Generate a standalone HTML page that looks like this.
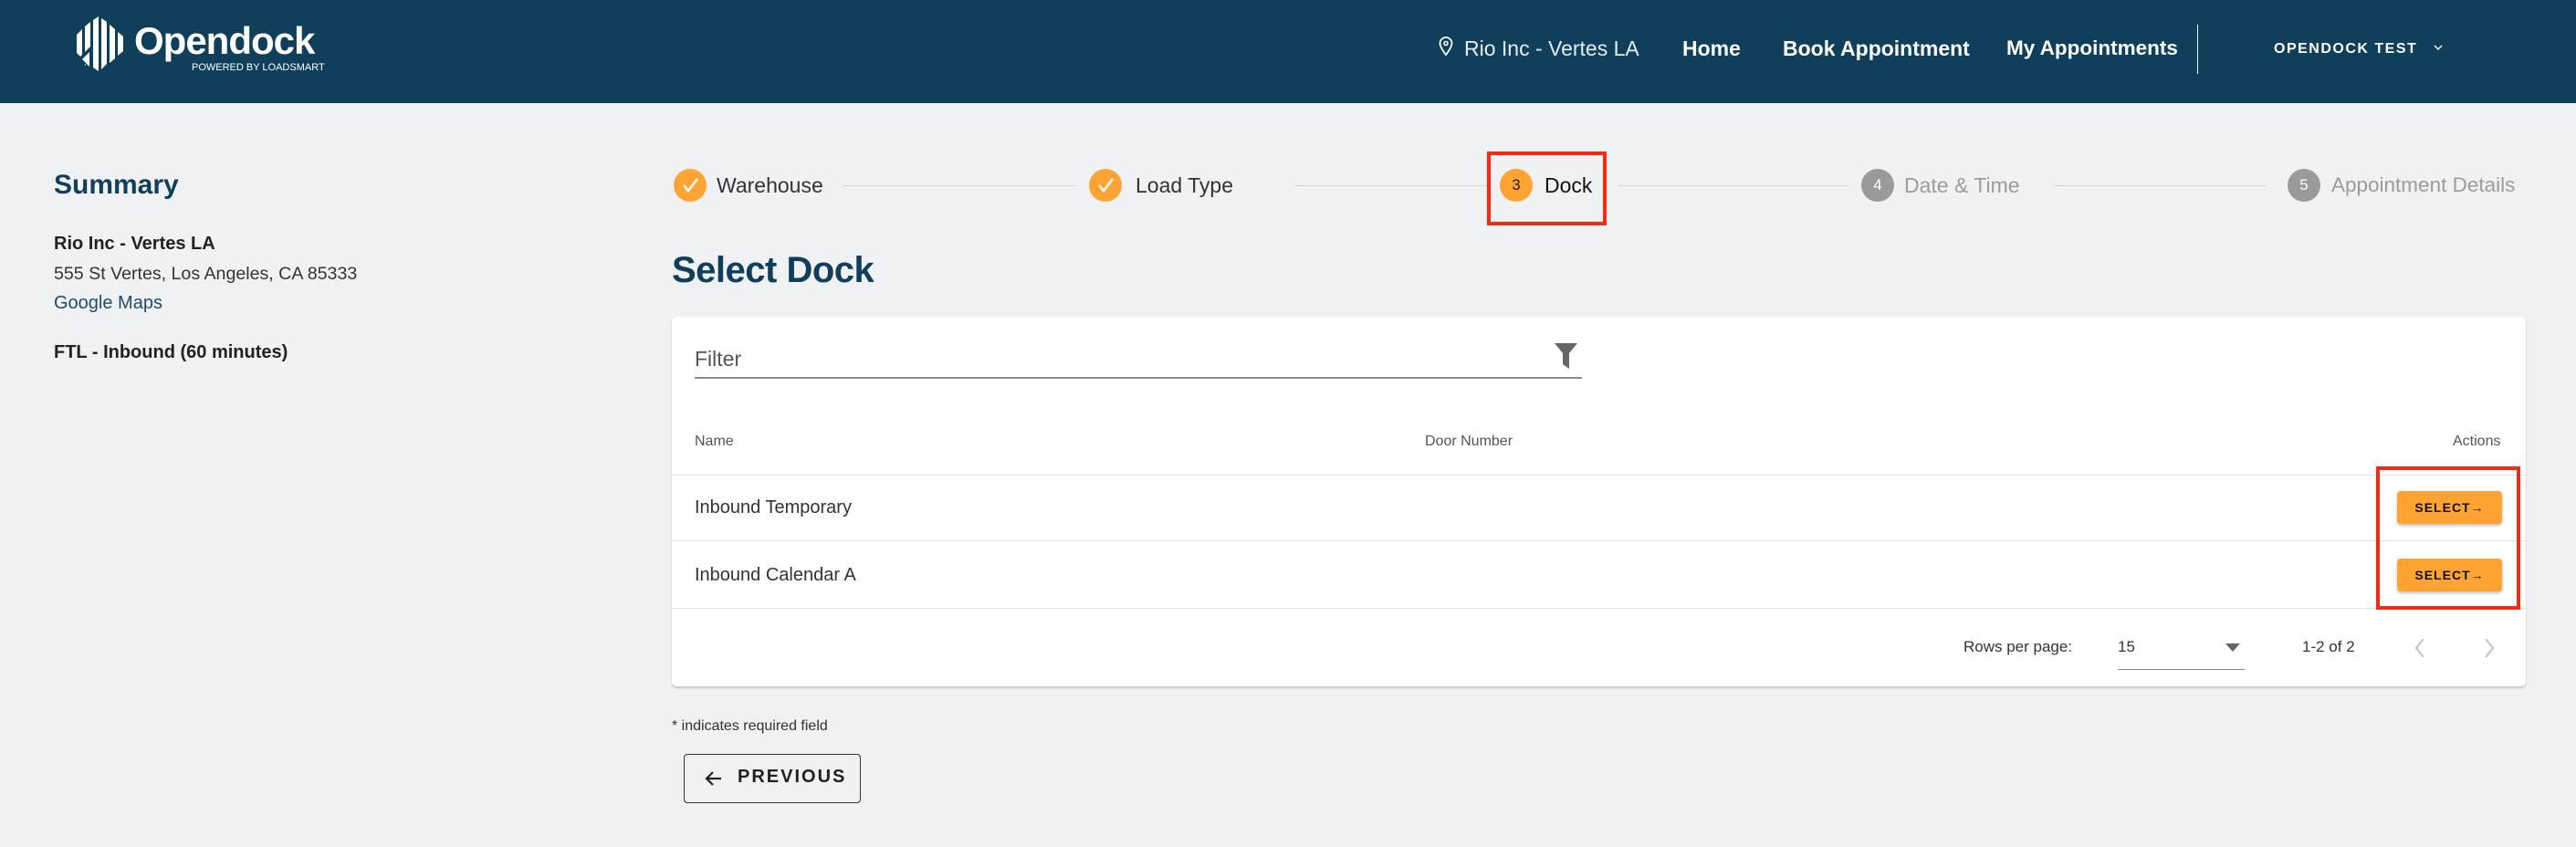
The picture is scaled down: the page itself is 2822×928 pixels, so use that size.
<!DOCTYPE html>
<html><head><meta charset="utf-8"><style>
*{margin:0;padding:0;box-sizing:border-box}
body{width:2822px;height:928px;background:#f0f1f3;font-family:"Liberation Sans",sans-serif;position:relative;overflow:hidden;color:#222}
.a{position:absolute;white-space:nowrap}
.hdr{position:absolute;left:0;top:0;width:2822px;height:113px;background:#0f3f5a}
.nav{color:#fff;font-size:23px;font-weight:bold;top:40px}
.circ{position:absolute;width:36px;height:36px;border-radius:50%;top:185px;color:#fff;font-size:17px;text-align:center;line-height:36px}
.or{background:#ffa333}
.gr{background:#9a9a9a}
.line{position:absolute;height:1px;background:#d0d2d5;top:203px}
.st{top:190px;font-size:23px}
.btn{position:absolute;left:2626px;width:115px;height:36px;background:#ffa333;border-radius:4px;box-shadow:0 2px 3px rgba(0,0,0,.25);font-size:14px;font-weight:bold;letter-spacing:1px;text-align:center;line-height:36px;color:#111}
.rl{position:absolute;left:736px;width:2031px;height:1px;background:#e2e2e2}
</style></head><body>
<div class="hdr"></div>
<svg class="a" style="left:84px;top:18px" width="52" height="60" viewBox="0 0 52 60">
<g fill="#fff">
<polygon points="0,20 6,14 6,46 0,40"/>
<polygon points="9,11 15,6 15,50 9,54"/>
<polygon points="18,4 24,0 24,60 18,56"/>
<polygon points="27,2 33,6 33,52 27,58"/>
<polygon points="36,9 42,14 42,46 36,51"/>
<polygon points="45,17 51,22 51,38 45,43"/>
</g>
<polygon points="2,46 16,32 16,58" fill="#0f3f5a"/>
<polygon points="6,47 14,39 14,55" fill="#fff"/>
</svg>
<div class="a" style="left:147px;top:21px;color:#fff;font-size:42px;font-weight:bold;letter-spacing:-1px">Opendock</div>
<div class="a" style="left:210px;top:68px;color:#fff;font-size:11px">POWERED BY LOADSMART</div>
<svg class="a" style="left:1576px;top:40px" width="16" height="22" viewBox="0 0 16 22"><path d="M8 1a6.5 6.5 0 0 0-6.5 6.5C1.5 12 8 20 8 20s6.5-8 6.5-12.5A6.5 6.5 0 0 0 8 1z" fill="none" stroke="#fff" stroke-width="1.8"/><circle cx="8" cy="7.5" r="2" fill="none" stroke="#fff" stroke-width="1.6"/></svg>
<div class="a nav" style="left:1604px;font-weight:normal;color:#e6ecf0">Rio Inc - Vertes LA</div>
<div class="a nav" style="left:1843px">Home</div>
<div class="a nav" style="left:1953px">Book Appointment</div>
<div class="a nav" style="left:2198px;font-size:22.5px">My Appointments</div>
<div class="a" style="left:2407px;top:27px;width:1px;height:54px;background:#fff"></div>
<div class="a" style="left:2491px;top:45px;color:#fff;font-size:16px;font-weight:bold;letter-spacing:1.5px">OPENDOCK TEST</div>
<svg class="a" style="left:2666px;top:49px" width="10" height="7"><path d="M1 1l4 4 4-4" fill="none" stroke="#fff" stroke-width="1.5"/></svg>

<div class="a" style="left:59px;top:186px;font-size:30px;font-weight:bold;color:#0f3f5a">Summary</div>
<div class="a" style="left:59px;top:256px;font-size:20px;font-weight:bold;color:#222">Rio Inc - Vertes LA</div>
<div class="a" style="left:59px;top:289px;font-size:19.6px;color:#333">555 St Vertes, Los Angeles, CA 85333</div>
<div class="a" style="left:59px;top:321px;font-size:20px;color:#1d4d6b">Google Maps</div>
<div class="a" style="left:59px;top:375px;font-size:20px;font-weight:bold;color:#222">FTL - Inbound (60 minutes)</div>

<div class="circ or" style="left:738px"><svg width="36" height="36" viewBox="0 0 36 36"><path d="M11 18l5 6 10-13" fill="none" stroke="#fff" stroke-width="2.5"/></svg></div>
<div class="a st" style="left:785px;color:#333">Warehouse</div>
<div class="line" style="left:922px;width:257px"></div>
<div class="circ or" style="left:1193px"><svg width="36" height="36" viewBox="0 0 36 36"><path d="M11 18l5 6 10-13" fill="none" stroke="#fff" stroke-width="2.5"/></svg></div>
<div class="a st" style="left:1244px;color:#333">Load Type</div>
<div class="line" style="left:1418px;width:211px"></div>
<div class="a" style="left:1629px;top:166px;width:131px;height:81px;border:4px solid #f42a14"></div>
<div class="circ or" style="left:1643px;color:#222">3</div>
<div class="a st" style="left:1692px;color:#111">Dock</div>
<div class="line" style="left:1773px;width:252px"></div>
<div class="circ gr" style="left:2039px">4</div>
<div class="a st" style="left:2086px;color:#9c9c9c">Date &amp; Time</div>
<div class="line" style="left:2250px;width:232px"></div>
<div class="circ gr" style="left:2506px">5</div>
<div class="a st" style="left:2554px;color:#9c9c9c;font-size:22.5px">Appointment Details</div>

<div class="a" style="left:736px;top:274px;font-size:40px;font-weight:bold;color:#0f3f5a;letter-spacing:-0.5px">Select Dock</div>

<div class="a" style="left:736px;top:347px;width:2031px;height:405px;background:#fff;border-radius:5px;box-shadow:0 2px 2px rgba(0,0,0,.18)"></div>
<div class="a" style="left:761px;top:380px;font-size:23px;color:#555">Filter</div>
<div class="a" style="left:761px;top:413px;width:972px;height:2px;background:#8a8a8a"></div>
<svg class="a" style="left:1703px;top:376px" width="25" height="28" viewBox="0 0 25 28"><path d="M0 0h25l-9 11v17l-7-5V11z" fill="#666"/></svg>
<div class="a" style="left:761px;top:475px;font-size:16px;color:#555">Name</div>
<div class="a" style="left:1561px;top:475px;font-size:16px;color:#555">Door Number</div>
<div class="a" style="left:2687px;top:475px;font-size:16px;color:#555">Actions</div>
<div class="rl" style="top:520px"></div>
<div class="rl" style="top:592px"></div>
<div class="rl" style="top:666px"></div>
<div class="a" style="left:761px;top:545px;font-size:20px;color:#333">Inbound Temporary</div>
<div class="a" style="left:761px;top:619px;font-size:20px;color:#333">Inbound Calendar A</div>
<div class="btn" style="top:538px">SELECT&#8594;</div>
<div class="btn" style="top:612px">SELECT&#8594;</div>
<div class="a" style="left:2603px;top:511px;width:158px;height:157px;border:4px solid #f42a14"></div>

<div class="a" style="left:2151px;top:699px;font-size:17px;color:#333">Rows per page:</div>
<div class="a" style="left:2320px;top:699px;font-size:17px;color:#333">15</div>
<div class="a" style="left:2320px;top:733px;width:139px;height:1px;background:#888"></div>
<svg class="a" style="left:2438px;top:705px" width="16" height="10"><path d="M0 0h16L8 9z" fill="#666"/></svg>
<div class="a" style="left:2522px;top:699px;font-size:17px;color:#333">1-2 of 2</div>
<svg class="a" style="left:2644px;top:698px" width="14" height="24"><path d="M11 2L3 12l8 10" fill="none" stroke="#c4c4c4" stroke-width="2.2"/></svg>
<svg class="a" style="left:2720px;top:698px" width="14" height="24"><path d="M3 2l8 10-8 10" fill="none" stroke="#c4c4c4" stroke-width="2.2"/></svg>

<div class="a" style="left:736px;top:787px;font-size:16px;color:#333">* indicates required field</div>
<div class="a" style="left:749px;top:826px;width:194px;height:54px;border:1.5px solid #333;border-radius:4px"></div>
<svg class="a" style="left:772px;top:843px" width="20" height="20" viewBox="0 0 20 20"><path d="M18 10H3M9 3l-7 7 7 7" fill="none" stroke="#222" stroke-width="2.2"/></svg>
<div class="a" style="left:808px;top:840px;font-size:20px;font-weight:bold;letter-spacing:2px;color:#222">PREVIOUS</div>
</body></html>
